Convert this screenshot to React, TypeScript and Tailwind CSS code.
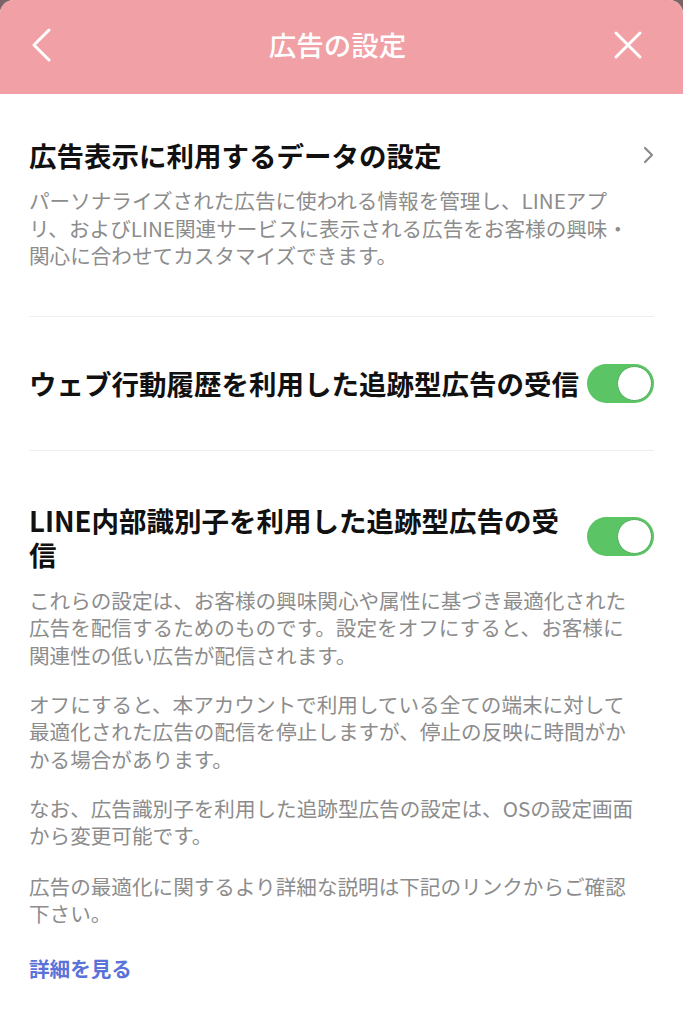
function Toggle() {
  return (
    <div className="flex h-[39px] w-[67px] shrink-0 items-center justify-end rounded-full bg-[#5bc465] pr-[2px]">
      <div className="h-[35px] w-[35px] rounded-full border border-[#4fae58] bg-white" />
    </div>
  );
}

export default function App() {
  return (
    <div className="min-h-screen bg-[#7a6466] font-['Noto_Sans_CJK_JP','Noto_Sans',sans-serif]">
      <div className="min-h-[1024px] overflow-hidden rounded-t-[14px] bg-white">
        <header className="flex h-[94px] items-center justify-between bg-[#f1a0a5] px-[28px] pb-[5px]">
          <svg width="24" height="34" viewBox="0 0 24 34" fill="none" className="ml-[2px]">
            <path d="M19 2 L4 17 L19 32" stroke="white" strokeWidth="3" strokeLinecap="round" strokeLinejoin="round" />
          </svg>
          <h1 className="ml-[8px] text-[27.5px] font-medium text-white">広告の設定</h1>
          <svg width="30" height="30" viewBox="0 0 30 30" fill="none" className="mr-[12px]">
            <path d="M3 3 L27 27 M27 3 L3 27" stroke="white" strokeWidth="3" strokeLinecap="round" />
          </svg>
        </header>

        <main className="px-[29px] text-[#111]">
          <section className="pt-[44px] pb-[46px]">
            <div className="flex items-center justify-between">
              <h2 className="text-[27.5px] font-bold leading-[34px]">広告表示に利用するデータの設定</h2>
              <svg width="12" height="18" viewBox="0 0 12 18" fill="none" className="mr-[-1px]">
                <path d="M2 2 L9 9 L2 16" stroke="#8a8a8a" strokeWidth="2.2" strokeLinecap="round" strokeLinejoin="round" />
              </svg>
            </div>
            <p className="mt-[15px] text-[20.6px] leading-[27.5px] text-[#8c8c8c]">
              パーソナライズされた広告に使われる情報を管理し、LINEアプ
              <br />
              リ、およびLINE関連サービスに表示される広告をお客様の興味・
              <br />
              関心に合わせてカスタマイズできます。
            </p>
          </section>

          <div className="h-px bg-[#efefef]" />

          <section className="flex items-center justify-between pt-[47px] pb-[47px]">
            <h2 className="text-[27.5px] font-bold leading-[39px]">ウェブ行動履歴を利用した追跡型広告の受信</h2>
            <Toggle />
          </section>

          <div className="h-px bg-[#efefef]" />

          <section className="pt-[52px] pb-[40px]">
            <div className="flex items-center justify-between">
              <h2 className="text-[27.5px] font-bold leading-[34px]">
                LINE内部識別子を利用した追跡型広告の受
                <br />
                信
              </h2>
              <Toggle />
            </div>
            <div className="mt-[16px] text-[20.6px] leading-[27.5px] text-[#8c8c8c]">
              <p>
                これらの設定は、お客様の興味関心や属性に基づき最適化された
                <br />
                広告を配信するためのものです。設定をオフにすると、お客様に
                <br />
                関連性の低い広告が配信されます。
              </p>
              <p className="mt-[21.5px]">
                オフにすると、本アカウントで利用している全ての端末に対して
                <br />
                最適化された広告の配信を停止しますが、停止の反映に時間がか
                <br />
                かる場合があります。
              </p>
              <p className="mt-[21.5px]">
                なお、広告識別子を利用した追跡型広告の設定は、OSの設定画面
                <br />
                から変更可能です。
              </p>
              <p className="mt-[23px]">
                広告の最適化に関するより詳細な説明は下記のリンクからご確認
                <br />
                下さい。
              </p>
            </div>
            <a className="mt-[27px] block text-[20.6px] font-bold leading-[27.5px] text-[#5a73d8]">詳細を見る</a>
          </section>
        </main>
      </div>
    </div>
  );
}
